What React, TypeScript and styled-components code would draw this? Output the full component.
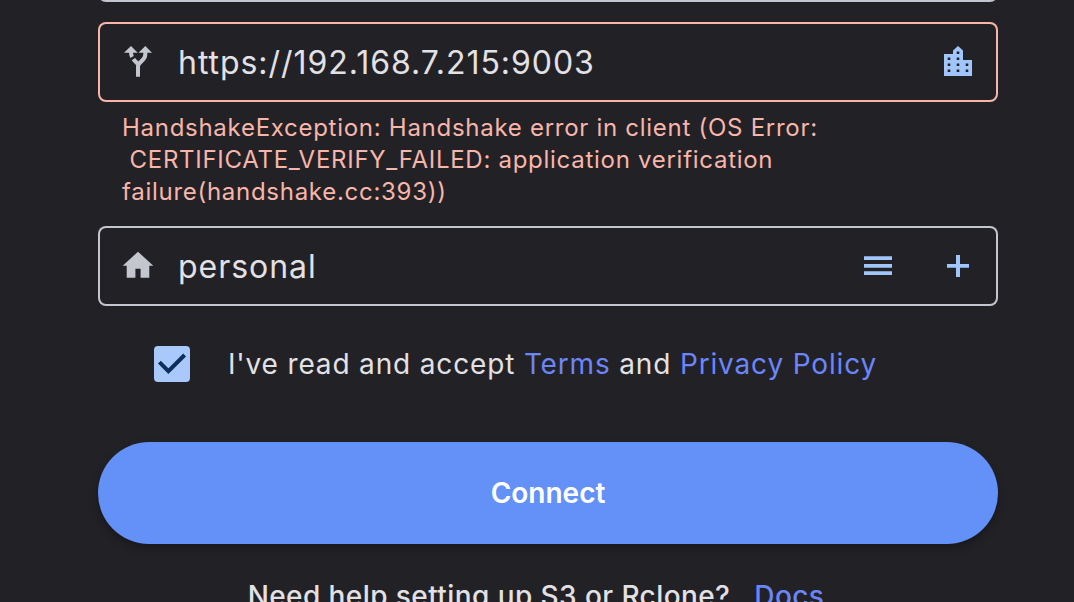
import React, { useState } from "react";
import styled, { createGlobalStyle } from "styled-components";

const color = {
  background: "#222126",
  text: "#e2e1e6",
  outline: "#c4c6cf",
  error: "#f8b6aa",
  accent: "#a0c6fb",
  checkbox: "#a9c8fb",
  checkmark: "#0b305b",
  link: "#6b86fb",
  primary: "#6391f8",
};

const GlobalStyle = createGlobalStyle`
  *, *::before, *::after {
    box-sizing: border-box;
  }

  body {
    margin: 0;
    overflow: hidden;
    background: ${color.background};
    color: ${color.text};
    font-family: Inter, "Liberation Sans", sans-serif;
  }
`;

const Form = styled.form`
  display: flex;
  flex-direction: column;
  padding: 0 76px 0 98px;
`;

const PreviousFieldEdge = styled.div`
  height: 12px;
  margin: -10px 0 20px;
  border: 2px solid ${color.outline};
  border-top: 0;
  border-radius: 0 0 8px 8px;
`;

const Field = styled.div<{ $invalid?: boolean }>`
  display: flex;
  height: 80px;
  border-radius: 8px;
  box-shadow: inset 0 0 0 2px ${(p) => (p.$invalid ? color.error : color.outline)};
`;

const FieldIcon = styled.label`
  display: grid;
  place-items: center;
  flex: 0 0 80px;
  color: ${color.outline};
`;

const Glyph = styled.svg.attrs({ viewBox: "0 0 36 36", "aria-hidden": true })`
  width: 36px;
  height: 36px;
  fill: currentColor;
`;

const TextInput = styled.input`
  flex: 1;
  min-width: 0;
  padding: 0;
  border: 0;
  outline: 0;
  background: transparent;
  color: inherit;
  font: inherit;
  font-size: 32px;
  letter-spacing: 0.03em;
`;

const IconButton = styled.button`
  display: grid;
  place-items: center;
  flex: 0 0 80px;
  padding: 0;
  border: 0;
  background: transparent;
  color: ${color.accent};
  cursor: pointer;
`;

const ErrorText = styled.p`
  margin: 10px 0 18px;
  padding: 0 24px;
  color: ${color.error};
  font-size: 24px;
  line-height: 32px;
  letter-spacing: 0.03em;
  white-space: pre-wrap;
`;

const ConsentRow = styled.div`
  display: flex;
  align-items: center;
  gap: 38px;
  margin: 40px 0 60px;
  padding-left: 56px;
  font-size: 28px;
  line-height: 36px;
  letter-spacing: 0.03em;
`;

const CheckboxBox = styled.span`
  display: grid;
  flex: 0 0 36px;
  height: 36px;

  > * {
    grid-area: 1 / 1;
  }

  svg {
    visibility: hidden;
    pointer-events: none;
  }

  input:checked + svg {
    visibility: visible;
  }
`;

const Checkbox = styled.input`
  appearance: none;
  width: 36px;
  height: 36px;
  margin: 0;
  border: 4px solid ${color.outline};
  border-radius: 4px;

  &:checked {
    border-color: ${color.checkbox};
    background: ${color.checkbox};
  }
`;

const Link = styled.a`
  color: ${color.link};
  text-decoration: none;
`;

const ConnectButton = styled.button`
  height: 102px;
  border: 0;
  border-radius: 51px;
  background: ${color.primary};
  box-shadow: 0 4px 8px rgba(0, 0, 0, 0.3);
  color: #fff;
  font-family: inherit;
  font-size: 28px;
  font-weight: 600;
  cursor: pointer;
`;

const HelpLine = styled.p`
  display: flex;
  justify-content: center;
  gap: 24px;
  margin: 34px 0 0;
  padding-right: 24px;
  font-size: 28px;
  font-weight: 500;
  line-height: 36px;
  letter-spacing: 0.015em;
`;

const RouteIcon = () => (
  <Glyph>
    <path d="M11 2 17.7 8.7H4zM25.3 2 32 8.7H18.5z" />
    <path
      d="M18 32.7V22M18 22.5c0-5 7.3-5.5 7.3-12V8M11 8c0 2.2.3 3.8 1 5M13.4 15.2c1 1.5 2.8 2.8 4.6 5"
      fill="none"
      stroke="currentColor"
      strokeWidth="4"
    />
  </Glyph>
);

const CityIcon = () => (
  <Glyph>
    <path
      fillRule="evenodd"
      d="M4 10H13V6.5L18 2l5 4.5V16h9V32H4zM7.700 13.500v2.600h2.600v-2.600zM7.700 19.500v2.600h2.600v-2.600zM7.700 25.500v2.600h2.600v-2.600zM16.700 7.500v2.600h2.600V7.500zM16.700 13.500v2.600h2.600v-2.600zM16.700 19.500v2.600h2.600v-2.600zM16.700 25.500v2.600h2.600v-2.600zM25.700 19.500v2.600h2.600v-2.600zM25.700 25.500v2.600h2.600v-2.600z"
    />
  </Glyph>
);

const HouseIcon = () => (
  <Glyph>
    <path d="M18 3.7 33.3 17.7H29.3V29.7H20.6V20.7H15.4V29.7H6.7V17.7H2.7z" />
  </Glyph>
);

const ListIcon = () => (
  <Glyph>
    <path d="M4 8.3H32V12.1H4zM4 15.9H32V19.8H4zM4 23.3H32V27.1H4z" />
  </Glyph>
);

const PlusIcon = () => (
  <Glyph>
    <path d="M16 7H20V16H29V19.8H20V29H16V19.8H7V16H16z" />
  </Glyph>
);

export default function App() {
  const [address, setAddress] = useState("https://192.168.7.215:9003");
  const [bucket, setBucket] = useState("personal");
  const [accepted, setAccepted] = useState(true);

  return (
    <>
      <GlobalStyle />
      <Form onSubmit={(e) => e.preventDefault()}>
        <PreviousFieldEdge />
        <Field $invalid>
          <FieldIcon htmlFor="address" aria-label="Endpoint">
            <RouteIcon />
          </FieldIcon>
          <TextInput
            id="address"
            value={address}
            spellCheck={false}
            aria-invalid
            aria-describedby="address-error"
            onChange={(e) => setAddress(e.target.value)}
          />
          <IconButton type="button" aria-label="Choose provider">
            <CityIcon />
          </IconButton>
        </Field>
        <ErrorText id="address-error">
          {"HandshakeException: Handshake error in client (OS Error:\n CERTIFICATE_VERIFY_FAILED: application verification failure(handshake.cc:393))"}
        </ErrorText>
        <Field>
          <FieldIcon htmlFor="bucket" aria-label="Bucket">
            <HouseIcon />
          </FieldIcon>
          <TextInput
            id="bucket"
            value={bucket}
            spellCheck={false}
            onChange={(e) => setBucket(e.target.value)}
          />
          <IconButton type="button" aria-label="List buckets">
            <ListIcon />
          </IconButton>
          <IconButton type="button" aria-label="Add bucket">
            <PlusIcon />
          </IconButton>
        </Field>
        <ConsentRow>
          <CheckboxBox>
            <Checkbox
              id="consent"
              type="checkbox"
              checked={accepted}
              onChange={(e) => setAccepted(e.target.checked)}
            />
            <svg width="36" height="36" viewBox="0 0 36 36" fill="none" aria-hidden>
              <path d="M5.4 16.2 14.4 25.2 30.6 9" stroke={color.checkmark} strokeWidth="4" />
            </svg>
          </CheckboxBox>
          <label htmlFor="consent">
            I've read and accept <Link href="#terms">Terms</Link> and{" "}
            <Link href="#privacy">Privacy Policy</Link>
          </label>
        </ConsentRow>
        <ConnectButton type="submit">Connect</ConnectButton>
        <HelpLine>
          <span>Need help setting up S3 or Rclone?</span>
          <Link href="#docs">Docs</Link>
        </HelpLine>
      </Form>
    </>
  );
}
